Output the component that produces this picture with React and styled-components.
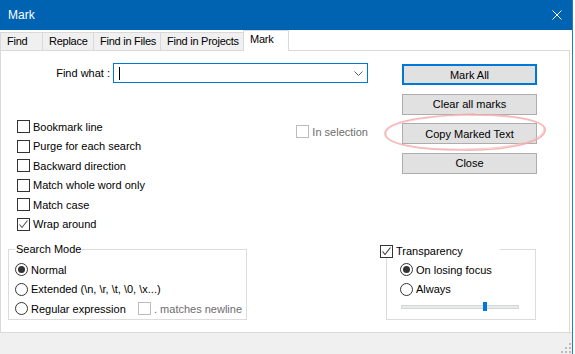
import React from 'react';
import styled, { createGlobalStyle } from 'styled-components';

const Global = createGlobalStyle`
  html, body { margin: 0; padding: 0; background: #fff; }
  body {
    font-family: "Liberation Sans", Arial, sans-serif;
    font-size: 11px;
    color: #000;
  }
  #root { width: 575px; height: 354px; overflow: hidden; }
  * { box-sizing: border-box; }
`;

const Screen = styled.div`
  width: 575px;
  height: 354px;
  display: flex;
  background: #fff;
`;

const Window = styled.div`
  width: 573px;
  height: 354px;
  display: flex;
  flex-direction: column;
  background: #fff;
  border-right: 1px solid #2a78c8;
`;

const TitleBar = styled.div`
  flex: 0 0 30px;
  background: #0063b1;
  display: flex;
  align-items: center;
  justify-content: space-between;
  padding-left: 8px;
  color: #fff;
  font-family: "Liberation Sans", Arial, sans-serif;
  font-size: 12px;
`;

const CloseBox = styled.div`
  width: 30px;
  height: 30px;
  display: flex;
  align-items: center;
  justify-content: center;
`;

const TabStrip = styled.div`
  flex: 0 0 20px;
  display: flex;
  align-items: flex-end;
`;

const Tab = styled.div`
  width: ${p => p.$w}px;
  height: ${p => (p.$active ? 21 : 18)}px;
  margin-left: ${p => (p.$first ? 0 : -1)}px;
  margin-bottom: ${p => (p.$active ? -1 : 0)}px;
  position: relative;
  z-index: ${p => (p.$active ? 1 : 0)};
  border: 1px solid #d9d9d9;
  border-bottom: none;
  background: ${p => (p.$active ? '#fff' : '#f0f0f0')};
  padding-left: 6px;
  line-height: 17px;
  letter-spacing: -0.25px;
  white-space: nowrap;
`;

const Panel = styled.div`
  flex: 1;
  margin-right: 2px;
  border: 1px solid #d9d9d9;
  border-bottom: none;
  background: #fff;
  position: relative;
  display: flex;
  flex-direction: column;
  padding-top: 12px;
`;

const TopRow = styled.div`
  display: flex;
`;

const LeftCol = styled.div`
  width: 367px;
  display: flex;
  flex-direction: column;
`;

const FindRow = styled.div`
  display: flex;
  height: 20px;
`;

const FindLabel = styled.div`
  width: 112px;
  text-align: right;
  padding-right: 3px;
  line-height: 20px;
  white-space: nowrap;
`;

const Combo = styled.div`
  width: 255px;
  height: 20px;
  border: 1px solid #0078d7;
  display: flex;
  align-items: center;
  justify-content: space-between;
  padding: 0 4px 0 5px;
`;

const Caret = styled.span`
  width: 1px;
  height: 13px;
  background: #000;
`;

const Options = styled.div`
  display: flex;
  margin-top: 34px;
  padding-left: 16px;
`;

const CheckList = styled.div`
  width: 282px;
  display: flex;
  flex-direction: column;
`;

const OptRow = styled.label`
  height: 19.5px;
  display: flex;
  align-items: center;
  gap: 3px;
  white-space: nowrap;
  color: ${p => (p.$disabled ? '#6d6d6d' : '#000')};
  margin-top: ${p => p.$offset || 0}px;
`;

const Box = styled.span`
  width: 13px;
  height: 13px;
  flex: 0 0 13px;
  border: 1px solid ${p => (p.$disabled ? '#bcbcbc' : '#333')};
  background: #fff;
  display: flex;
  align-items: center;
  justify-content: center;
`;

const Round = styled.span`
  width: 13px;
  height: 13px;
  flex: 0 0 13px;
  border: 1px solid #333;
  border-radius: 50%;
  background: #fff;
  display: flex;
  align-items: center;
  justify-content: center;
  &::after {
    content: '';
    display: ${p => (p.$checked ? 'block' : 'none')};
    width: 7px;
    height: 7px;
    border-radius: 50%;
    background: #333;
  }
`;

const RightCol = styled.div`
  margin-left: 34px;
  padding-top: 1px;
  display: flex;
  flex-direction: column;
  gap: 8.5px;
`;

const Button = styled.div`
  width: 135px;
  height: 21px;
  background: #e1e1e1;
  border: ${p => (p.$default ? '2px solid #0078d7' : '1px solid #adadad')};
  display: flex;
  align-items: center;
  justify-content: center;
  white-space: nowrap;
`;

const BottomRow = styled.div`
  display: flex;
  margin-top: 15px;
  padding-left: 7px;
`;

const Group = styled.div`
  position: relative;
  width: ${p => p.$w}px;
  height: 71px;
  border: 1px solid #dcdcdc;
  padding: 10px 0 0 ${p => p.$pad}px;
  margin-left: ${p => (p.$right ? 'auto' : '0')};
  margin-right: ${p => (p.$right ? 33 : 0)}px;
  display: flex;
  flex-direction: column;
`;

const Legend = styled.div`
  position: absolute;
  top: ${p => p.$top}px;
  left: ${p => p.$left}px;
  width: ${p => (p.$w ? `${p.$w}px` : 'auto')};
  height: 13px;
  padding: 0 1px;
  background: #fff;
  line-height: 13px;
  display: flex;
  align-items: center;
  gap: 3px;
  white-space: nowrap;
`;

const RadioRow = styled.div`
  height: 19.5px;
  display: flex;
  align-items: center;
  white-space: nowrap;
`;

const RadioItem = styled.label`
  display: flex;
  align-items: center;
  gap: 3px;
  width: ${p => (p.$w ? `${p.$w}px` : 'auto')};
`;

const Slider = styled.div`
  position: relative;
  width: 118px;
  height: 9px;
  margin: 3px 0 0 1px;
  padding-top: 3px;
`;

const Track = styled.div`
  height: 4px;
  background: #e7eaea;
  border: 1px solid #d6d6d6;
`;

const Thumb = styled.div`
  position: absolute;
  top: 0;
  left: 82px;
  width: 4px;
  height: 9px;
  background: #0078d7;
`;

const Annotation = styled.svg`
  position: absolute;
  left: 379px;
  top: 57px;
  pointer-events: none;
`;

const StatusBar = styled.div`
  flex: 0 0 22px;
  background: #f0f0f0;
  border-top: 1px solid #dadada;
  display: flex;
  justify-content: flex-end;
  align-items: flex-end;
  padding: 0 1px 1px 0;
`;

const Check = ({ color = '#555' }) => (
  <svg width="11" height="11" viewBox="0 0 11 11">
    <polyline points="1.5,5.5 4,8.5 9.5,1.5" fill="none" stroke={color} strokeWidth="1.1" />
  </svg>
);

const CheckOpt = ({ label, checked, disabled, offset }) => (
  <OptRow $disabled={disabled} $offset={offset}>
    <Box $disabled={disabled}>{checked && <Check />}</Box>
    <span>{label}</span>
  </OptRow>
);

const tabs = [
  { label: 'Find', w: 43 },
  { label: 'Replace', w: 52 },
  { label: 'Find in Files', w: 68 },
  { label: 'Find in Projects', w: 84 },
  { label: 'Mark', w: 46, active: true },
];

const options = [
  { label: 'Bookmark line' },
  { label: 'Purge for each search' },
  { label: 'Backward direction' },
  { label: 'Match whole word only' },
  { label: 'Match case' },
  { label: 'Wrap around', checked: true },
];

const buttons = [
  { label: 'Mark All', def: true },
  { label: 'Clear all marks' },
  { label: 'Copy Marked Text' },
  { label: 'Close' },
];

export default function App() {
  return (
    <Screen>
      <Global />
      <Window>
        <TitleBar>
          <span>Mark</span>
          <CloseBox>
            <svg width="10" height="10" viewBox="0 0 10 10">
              <path d="M0.5 0.5 L9.5 9.5 M9.5 0.5 L0.5 9.5" stroke="#fff" strokeWidth="1" />
            </svg>
          </CloseBox>
        </TitleBar>
        <TabStrip>
          {tabs.map((t, i) => (
            <Tab key={t.label} $w={t.w} $active={t.active} $first={i === 0}>
              {t.label}
            </Tab>
          ))}
        </TabStrip>
        <Panel>
          <TopRow>
            <LeftCol>
              <FindRow>
                <FindLabel>Find what :</FindLabel>
                <Combo>
                  <Caret />
                  <svg width="9" height="5" viewBox="0 0 9 5">
                    <polyline points="0.5,0.5 4.5,4.5 8.5,0.5" fill="none" stroke="#606060" strokeWidth="1" />
                  </svg>
                </Combo>
              </FindRow>
              <Options>
                <CheckList>
                  {options.map(o => (
                    <CheckOpt key={o.label} label={o.label} checked={o.checked} />
                  ))}
                </CheckList>
                <div>
                  <CheckOpt label="In selection" disabled offset={5} />
                </div>
              </Options>
            </LeftCol>
            <RightCol>
              {buttons.map(b => (
                <Button key={b.label} $default={b.def}>{b.label}</Button>
              ))}
            </RightCol>
          </TopRow>
          <BottomRow>
            <Group $w={239} $pad={6}>
              <Legend $top={-7} $left={6}>Search Mode</Legend>
              <RadioRow>
                <RadioItem><Round $checked /><span>Normal</span></RadioItem>
              </RadioRow>
              <RadioRow>
                <RadioItem><Round /><span>Extended (\n, \r, \t, \0, \x...)</span></RadioItem>
              </RadioRow>
              <RadioRow>
                <RadioItem $w={123}><Round /><span>Regular expression</span></RadioItem>
                <CheckOpt label=". matches newline" disabled />
              </RadioRow>
            </Group>
            <Group $w={150} $pad={13} $right>
              <Legend $top={-5} $left={-8} $w={121}>
                <Box><Check color="#333" /></Box>
                <span>Transparency</span>
              </Legend>
              <RadioRow>
                <RadioItem><Round $checked /><span>On losing focus</span></RadioItem>
              </RadioRow>
              <RadioRow>
                <RadioItem><Round /><span>Always</span></RadioItem>
              </RadioRow>
              <Slider>
                <Track />
                <Thumb />
              </Slider>
            </Group>
          </BottomRow>
          <Annotation width="172" height="50" viewBox="0 0 172 50">
            <path
              d="M90 7 C140 6, 168 14, 165 23 C162 36, 120 43, 80 42 C40 42, 4 36, 5 25 C6 14, 40 8, 95 6"
              fill="none" stroke="#f2a9a9" strokeWidth="1.6" opacity="0.85"
            />
            <path
              d="M70 8 C120 5, 166 12, 164 21 C163 34, 125 41, 85 41 C45 42, 6 38, 6 26 C5 16, 35 10, 80 7"
              fill="none" stroke="#f5c0c0" strokeWidth="1.2" opacity="0.7"
            />
          </Annotation>
        </Panel>
        <StatusBar>
          <svg width="10" height="10" viewBox="0 0 10 10">
            {[[8, 0], [4, 4], [8, 4], [0, 8], [4, 8], [8, 8]].map(([x, y]) => (
              <rect key={`${x}-${y}`} x={x} y={y} width="2" height="2" fill="#bcbcbc" />
            ))}
          </svg>
        </StatusBar>
      </Window>
    </Screen>
  );
}
